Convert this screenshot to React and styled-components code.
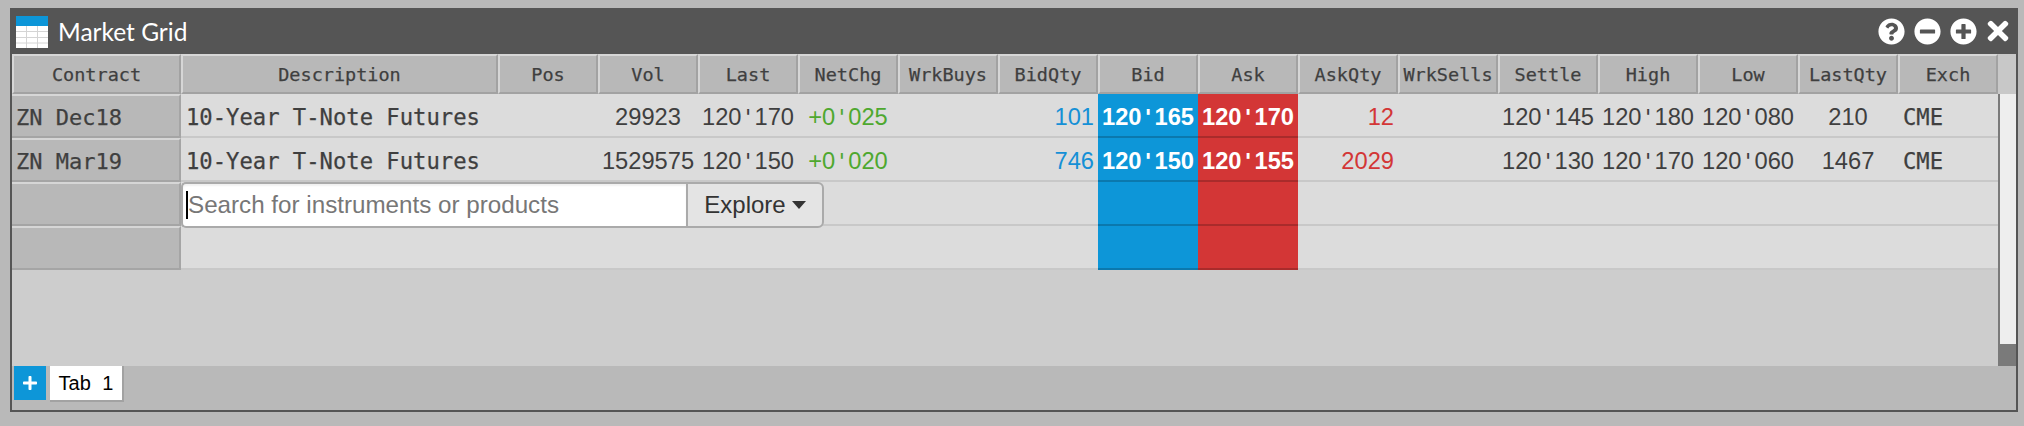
import React from "react";
import styled, { createGlobalStyle } from "styled-components";
import { FaQuestionCircle, FaMinusCircle, FaPlusCircle, FaTimes, FaPlus } from "react-icons/fa";

const COLUMNS = [
  "Pos", "Vol", "Last", "NetChg", "WrkBuys", "BidQty", "Bid", "Ask",
  "AskQty", "WrkSells", "Settle", "High", "Low", "LastQty", "Exch",
];

const ROWS = [
  {
    contract: "ZN Dec18", description: "10-Year T-Note Futures", vol: "29923", last: "120'170", netChg: "+0'025",
    bidQty: "101", bid: "120'165", ask: "120'170", askQty: "12", settle: "120'145", high: "120'180", low: "120'080",
    lastQty: "210", exch: "CME",
  },
  {
    contract: "ZN Mar19", description: "10-Year T-Note Futures", vol: "1529575", last: "120'150", netChg: "+0'020",
    bidQty: "746", bid: "120'150", ask: "120'155", askQty: "2029", settle: "120'130", high: "120'170", low: "120'060",
    lastQty: "1467", exch: "CME",
  },
];

const Price = ({ value }) => {
  const [whole, frac] = value.split("'");
  return (
    <>
      {whole}
      <Tick>'</Tick>
      {frac}
    </>
  );
};

const App = () => {
  return (
    <>
      <GlobalStyle />
      <Window>
        <TitleBar>
          <TitleIcon viewBox="0 0 32 32">
            <rect width="32" height="32" fill="#fff" />
            <rect width="32" height="10" fill="#0d96d8" />
            <path d="M0 15.5h32M0 21.5h32M0 27h32M10.5 10v22M21.5 10v22" stroke="#d4d4d4" strokeWidth="1" />
          </TitleIcon>
          <Title>Market Grid</Title>
          <TitleActions>
            <FaQuestionCircle />
            <FaMinusCircle />
            <FaPlusCircle />
            <CloseIcon />
          </TitleActions>
        </TitleBar>
        <Body>
          <GridArea>
            <Grid>
              <HeadCell>Contract</HeadCell>
              <HeadCell>Description</HeadCell>
              {COLUMNS.map((c) => (
                <HeadCell key={c}>{c}</HeadCell>
              ))}

              {ROWS.map((r) => (
                <React.Fragment key={r.contract}>
                  <RowHead>{r.contract}</RowHead>
                  <Cell>{r.description}</Cell>
                  <Cell />
                  <Num>{r.vol}</Num>
                  <Num><Price value={r.last} /></Num>
                  <Num $color="#4ea82f"><Price value={r.netChg} /></Num>
                  <Cell />
                  <Num $align="right" $color="#1590d6">{r.bidQty}</Num>
                  <Num $fill="blue"><Price value={r.bid} /></Num>
                  <Num $fill="red"><Price value={r.ask} /></Num>
                  <Num $align="right" $color="#d33636">{r.askQty}</Num>
                  <Cell />
                  <Num><Price value={r.settle} /></Num>
                  <Num><Price value={r.high} /></Num>
                  <Num><Price value={r.low} /></Num>
                  <Num>{r.lastQty}</Num>
                  <Cell>{r.exch}</Cell>
                </React.Fragment>
              ))}

              <RowHead />
              <SearchCell>
                <SearchBox>
                  <Caret />
                  <Placeholder>Search for instruments or products</Placeholder>
                </SearchBox>
                <Explore>
                  Explore
                  <ExploreArrow />
                </Explore>
              </SearchCell>
              <Cell $fill="blue" />
              <Cell $fill="red" />
              <TailCell />

              <RowHead />
              <WideCell />
              <Cell $fill="blue" />
              <Cell $fill="red" />
              <TailCell />
            </Grid>
          </GridArea>
          <Scrollbar>
            <ScrollCorner />
            <ScrollTrack />
            <ScrollThumb />
          </Scrollbar>
        </Body>
        <TabBar>
          <AddTab>
            <FaPlus />
          </AddTab>
          <Tab>Tab 1</Tab>
        </TabBar>
      </Window>
    </>
  );
};

export default App;

const GlobalStyle = createGlobalStyle`
  html, body {
    margin: 0;
    padding: 0;
    background: #b9b9b9;
  }
`;

const Window = styled.div`
  box-sizing: border-box;
  width: 2008px;
  height: 404px;
  margin: 8px 0 0 10px;
  border: 2px solid #555;
  border-top: 0;
  display: flex;
  flex-direction: column;
  background: #cdcdcd;
`;

const TitleBar = styled.div`
  height: 46px;
  flex: none;
  background: #555;
  display: flex;
  align-items: center;
  padding: 0 2px 0 4px;
`;

const TitleIcon = styled.svg`
  width: 32px;
  height: 32px;
  flex: none;
  margin-top: 2px;
`;

const Title = styled.div`
  margin-left: 10px;
  color: #fff;
  font: 400 24.5px Lato, sans-serif;
`;

const TitleActions = styled.div`
  margin-left: auto;
  display: flex;
  align-items: center;
  gap: 9px;
  color: #fff;
  font-size: 27px;
  padding-right: 1px;

  svg {
    display: block;
  }
`;

const CloseIcon = styled(FaTimes)`
  margin-left: -3px;
  font-size: 30px;
`;

const Body = styled.div`
  flex: 1;
  display: flex;
  min-height: 0;
`;

const GridArea = styled.div`
  flex: 1;
  min-width: 0;
`;

const Grid = styled.div`
  display: grid;
  grid-template-columns: 169px 317px repeat(15, 100px);
  grid-template-rows: 40px repeat(4, 44px);
  font-family: "DejaVu Sans Mono", monospace;
  color: #3f3f3f;
  -webkit-text-stroke: 0.25px;
`;

const HeadCell = styled.div`
  box-sizing: border-box;
  display: flex;
  align-items: center;
  justify-content: center;
  padding-top: 1px;
  background: #b8b8b8;
  border-style: solid;
  border-width: 2px;
  border-color: #d6d6d6 #a2a2a2 #a2a2a2 #d6d6d6;
  font-size: 18.5px;
  white-space: nowrap;
`;

const RowHead = styled.div`
  box-sizing: border-box;
  display: flex;
  align-items: center;
  padding: 2px 0 0 4px;
  background: #b8b8b8;
  border-top: 2px solid #d6d6d6;
  border-bottom: 2px solid #a5a5a5;
  border-right: 2px solid #a5a5a5;
  font-size: 22px;
  white-space: nowrap;
`;

const FILLS = { blue: "#0d96d8", red: "#d33636" };
const FILL_LINES = { blue: "#0b78ad", red: "#a92b2b" };

const Cell = styled.div`
  box-sizing: border-box;
  display: flex;
  align-items: center;
  padding: 4px 0 0 5px;
  background: ${(p) => FILLS[p.$fill] || "#dcdcdc"};
  border-bottom: 2px solid ${(p) => FILL_LINES[p.$fill] || "#c8c8c8"};
  font-size: 22.2px;
  white-space: nowrap;
`;

const Num = styled.div`
  box-sizing: border-box;
  display: flex;
  align-items: center;
  justify-content: ${(p) => (p.$align === "right" ? "flex-end" : "center")};
  padding: 4px ${(p) => (p.$align === "right" ? "4px" : "0")} 0 0;
  background: ${(p) => FILLS[p.$fill] || "#dcdcdc"};
  border-bottom: 2px solid ${(p) => FILL_LINES[p.$fill] || "#c8c8c8"};
  color: ${(p) => (p.$fill ? "#fff" : p.$color || "#3f3f3f")};
  font-family: "Liberation Sans", Arial, sans-serif;
  font-weight: ${(p) => (p.$fill ? 700 : 400)};
  font-size: 23.7px;
  white-space: nowrap;
  -webkit-text-stroke: 0;
`;

const Tick = styled.span`
  display: inline-block;
  width: 13px;
  text-align: center;
  font-family: "DejaVu Sans Mono", monospace;
  font-size: 22px;
`;

const SearchCell = styled.div`
  grid-column: 2 / span 7;
  box-sizing: border-box;
  display: flex;
  background: #dcdcdc;
  border-bottom: 2px solid #c8c8c8;
  -webkit-text-stroke: 0;
`;

const SearchBox = styled.div`
  box-sizing: border-box;
  position: relative;
  width: 505px;
  height: 46px;
  display: flex;
  align-items: center;
  padding-left: 5px;
  background: #fff;
  border: 2px solid #aaa;
  border-right: 0;
  border-radius: 5px 0 0 5px;
  box-shadow: inset 0 2px 2px rgba(0, 0, 0, 0.06);
  z-index: 1;
`;

const Caret = styled.span`
  position: absolute;
  left: 3px;
  top: 7px;
  width: 2px;
  height: 28px;
  background: #000;
`;

const Placeholder = styled.span`
  color: #777;
  font: 400 24.2px "Liberation Sans", Arial, sans-serif;
  white-space: nowrap;
`;

const Explore = styled.div`
  box-sizing: border-box;
  width: 138px;
  height: 46px;
  display: flex;
  align-items: center;
  justify-content: center;
  gap: 6px;
  background: #e4e4e4;
  border: 2px solid #aaa;
  border-radius: 0 6px 6px 0;
  color: #333;
  font: 400 24px "Liberation Sans", Arial, sans-serif;
  z-index: 1;
`;

const ExploreArrow = styled.span`
  width: 0;
  height: 0;
  border-left: 7px solid transparent;
  border-right: 7px solid transparent;
  border-top: 8px solid #333;
`;

const WideCell = styled(Cell)`
  grid-column: 2 / span 7;
`;

const TailCell = styled(Cell)`
  grid-column: span 7;
`;

const Scrollbar = styled.div`
  width: 18px;
  flex: none;
  display: flex;
  flex-direction: column;
`;

const ScrollCorner = styled.div`
  height: 40px;
  background: #c8c8c8;
`;

const ScrollTrack = styled.div`
  flex: 1;
  background: #eee;
  border-left: 2px solid #7a7a7a;
`;

const ScrollThumb = styled.div`
  height: 22px;
  background: #7a7a7a;
`;

const TabBar = styled.div`
  height: 44px;
  flex: none;
  display: flex;
  align-items: flex-start;
  padding-left: 2px;
  background: #b9b9b9;
`;

const AddTab = styled.div`
  width: 32px;
  height: 34px;
  display: flex;
  align-items: center;
  justify-content: center;
  background: #0d96d8;
  color: #fff;
  font-size: 16px;
`;

const Tab = styled.div`
  box-sizing: content-box;
  width: 72px;
  height: 34px;
  margin-left: 4px;
  display: flex;
  align-items: center;
  justify-content: center;
  background: #fff;
  border-right: 2px solid #a2a2a2;
  border-bottom: 2px solid #a2a2a2;
  color: #000;
  font: 400 20px "Liberation Sans", Arial, sans-serif;
  word-spacing: 6px;
`;
